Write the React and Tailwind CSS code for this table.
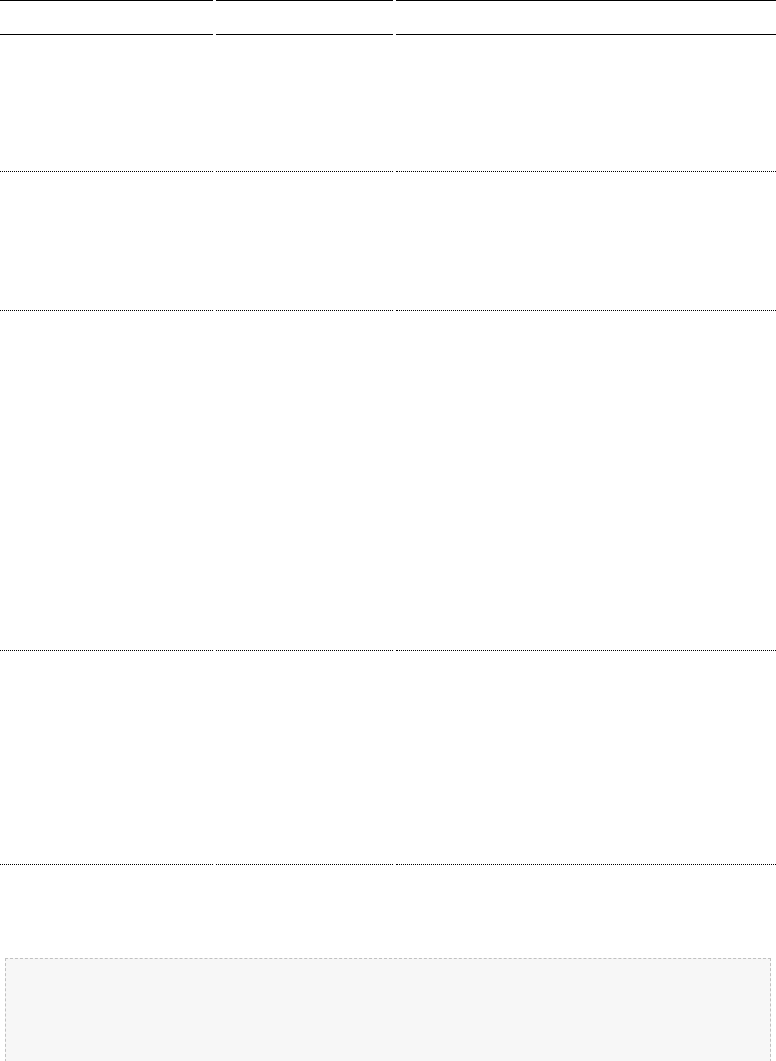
import React from "react";

const rows = [136, 138, 339, 213];

export default function App() {
  return (
    <div className="w-[776px] min-h-[1061px] bg-white font-['Liberation_Sans',sans-serif]">
      <div className="grid grid-cols-[213px_177px_1fr] gap-x-[3px]">
        <div className="h-[35px] border-t border-b border-black"></div>
        <div className="h-[35px] border-t border-b border-black"></div>
        <div className="h-[35px] border-t border-b border-black"></div>
        {rows.map((h, i) => (
          <React.Fragment key={i}>
            <div className="border-b border-dotted border-black" style={{ height: h + 1 }}></div>
            <div className="border-b border-dotted border-black" style={{ height: h + 1 }}></div>
            <div className="border-b border-dotted border-black" style={{ height: h + 1 }}></div>
          </React.Fragment>
        ))}
      </div>
      <div className="mx-[5px] mt-[93px] h-[104px] border border-dashed border-[#c0c0c0] bg-[#f7f7f7]"></div>
    </div>
  );
}
